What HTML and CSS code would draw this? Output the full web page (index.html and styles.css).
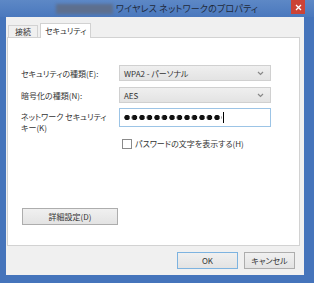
FILE: index.html
```html
<!DOCTYPE html>
<html lang="ja">
<head>
    <meta charset="UTF-8">
    <title>ワイヤレス ネットワークのプロパティ</title>
    <link rel="stylesheet" href="styles.css">
</head>
<body>
    <div class="window">
        <div class="titlebar">
            <div></div>
            <div class="title-group">
                <span class="ssid"></span>
                <span class="title">ワイヤレス ネットワークのプロパティ</span>
            </div>
            <div class="close">
                <svg width="7" height="7" viewBox="0 0 7 7"><path d="M1 1 L6 6 M6 1 L1 6" stroke="#fff" stroke-width="1.3"/></svg>
            </div>
        </div>

        <div class="client">
            <div class="tabs">
                <div class="tab">接続</div>
                <div class="tab active">セキュリティ</div>
            </div>

            <div class="panel">
                <div class="form">
                    <label class="lbl">セキュリティの種類(E):</label>
                    <div class="combo">
                        <span>WPA2 - パーソナル</span>
                        <svg width="7" height="5" viewBox="0 0 7 5"><path d="M1 1 L3.5 3.5 L6 1" fill="none" stroke="#888" stroke-width="1.2"/></svg>
                    </div>

                    <label class="lbl">暗号化の種類(N):</label>
                    <div class="combo">
                        <span>AES</span>
                        <svg width="7" height="5" viewBox="0 0 7 5"><path d="M1 1 L3.5 3.5 L6 1" fill="none" stroke="#888" stroke-width="1.2"/></svg>
                    </div>

                    <label class="lbl two">ネットワーク セキュリティ<br>キー(K)</label>
                    <div class="key">
                        <span class="dots"></span><span class="caret"></span>
                    </div>

                    <div></div>
                    <div class="check">
                        <span class="box"></span>
                        <span>パスワードの文字を表示する(H)</span>
                    </div>
                </div>

                <div class="btn advanced">詳細設定(D)</div>
            </div>

            <div class="footer">
                <div class="btn ok">OK</div>
                <div class="btn cancel">キャンセル</div>
            </div>
        </div>
    </div>
</body>
</html>
```

FILE: styles.css
```css
body {
    margin: 0;
    font-family: "Noto Sans CJK JP", "Noto Sans", sans-serif;
    font-feature-settings: "palt";
    color: #333;
}
.window {
    width: 314px;
    height: 283px;
    display: flex;
    flex-direction: column;
    background-color: #4574bb;
}
.titlebar {
    height: 17px;
    display: grid;
    grid-template-columns: 1fr auto 1fr;
    align-items: center;
    background: linear-gradient(#5d88c6, #4a78bd);
}
.title-group {
    display: flex;
    align-items: center;
    gap: 3px;
}
.ssid {
    width: 57px;
    height: 10px;
    background-color: #5d6f8e;
    filter: blur(1.5px);
}
.title {
    font-size: 9px;
    color: #1f2a3a;
    letter-spacing: 0.2px;
}
.close {
    justify-self: end;
    align-self: start;
    margin-right: 9px;
    width: 14px;
    height: 14px;
    background-color: #cc4336;
    display: flex;
    align-items: center;
    justify-content: center;
}
.client {
    flex: 1;
    margin: 0 10px 8px 6px;
    background-color: #f0f0f0;
    display: flex;
    flex-direction: column;
}
.tabs {
    height: 20px;
    display: flex;
    align-items: flex-end;
    padding-left: 2px;
}
.tab {
    height: 12px;
    padding: 0 6px;
    font-size: 8px;
    line-height: 12px;
    background-color: #f0f0f0;
    border: 1px solid #d2d2d2;
    border-bottom: none;
    box-sizing: border-box;
}
.tab.active {
    height: 15px;
    padding: 0 4px;
    margin-left: 2px;
    background-color: #fff;
    line-height: 14px;
    position: relative;
    top: 1px;
}
.panel {
    height: 209px;
    margin: 0 4px 0 1px;
    background-color: #fff;
    border: 1px solid #d2d2d2;
    box-sizing: border-box;
    display: flex;
    flex-direction: column;
    padding: 27px 0 20px 13px;
}
.form {
    display: grid;
    grid-template-columns: 98px 152px;
    row-gap: 6px;
    font-size: 8px;
}
.lbl {
    align-self: center;
}
.lbl.two {
    align-self: start;
    line-height: 11px;
    margin-top: 2px;
}
.combo {
    height: 16px;
    box-sizing: border-box;
    border: 1px solid #d0d0d0;
    background: linear-gradient(#efefef, #e3e3e3);
    display: flex;
    align-items: center;
    justify-content: space-between;
    padding: 0 6px 0 4px;
}
.key {
    height: 19px;
    margin-top: -1px;
    box-sizing: border-box;
    border: 1px solid #9cc4e6;
    background-color: #fff;
    display: flex;
    align-items: center;
    gap: 1px;
    padding-left: 4px;
}
.dots {
    width: 98px;
    height: 7px;
    background: radial-gradient(circle at 3px 3.5px, #111 2.4px, transparent 3px) 0 0 / 7.5px 7px repeat-x;
}
.caret {
    width: 1px;
    height: 11px;
    background-color: #000;
}
.check {
    display: flex;
    align-items: center;
    gap: 3px;
    padding-left: 3px;
    margin-top: -1px;
}
.box {
    width: 8px;
    height: 8px;
    border: 1px solid #8a8a8a;
    background-color: #fff;
}
.btn {
    height: 17px;
    box-sizing: border-box;
    border: 1px solid #adadad;
    background: linear-gradient(#f0f0f0, #e3e3e3);
    font-size: 8px;
    line-height: 15px;
    text-align: center;
}
.advanced {
    width: 96px;
    margin: auto 0 0 1px;
}
.footer {
    flex: 1;
    display: flex;
    justify-content: flex-end;
    align-items: flex-start;
    gap: 6px;
    padding: 6px 9px 0 0;
}
.ok {
    width: 61px;
    border-color: #7db3e0;
}
.cancel {
    width: 51px;
}
```
